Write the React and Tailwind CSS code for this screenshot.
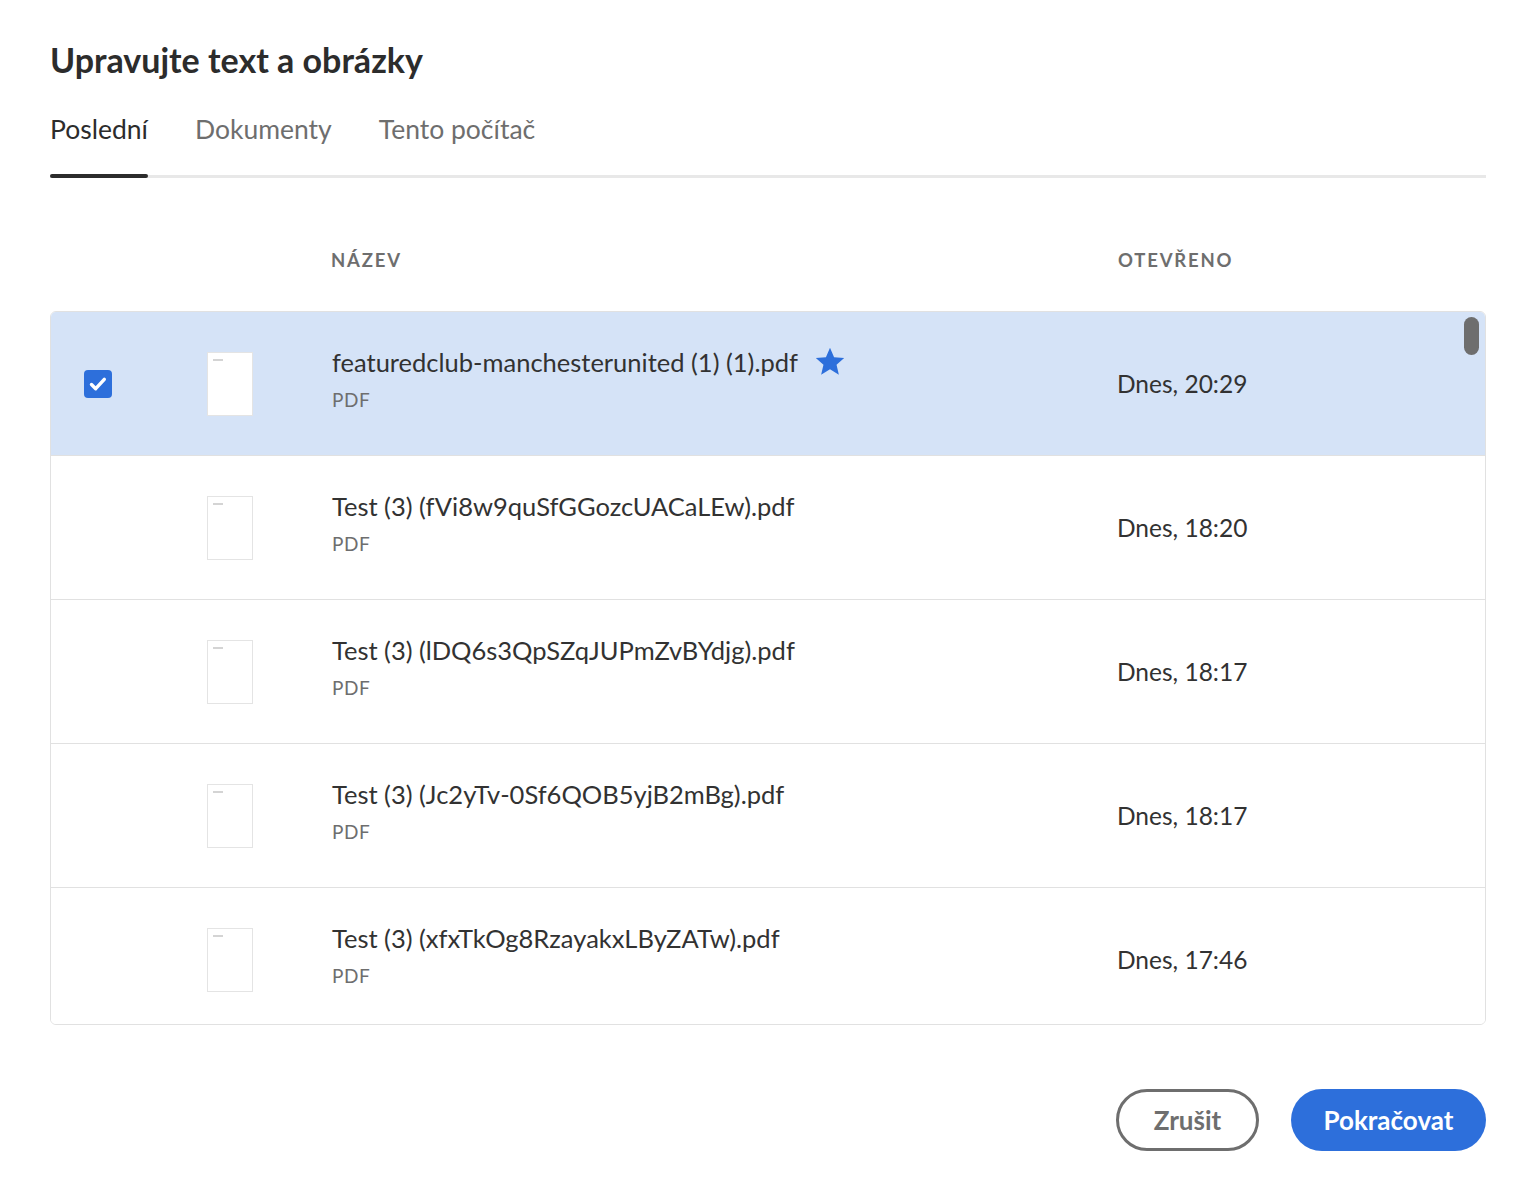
const files = [
  { name: "featuredclub-manchesterunited (1) (1).pdf", opened: "Dnes, 20:29", selected: true, starred: true },
  { name: "Test (3) (fVi8w9quSfGGozcUACaLEw).pdf", opened: "Dnes, 18:20" },
  { name: "Test (3) (lDQ6s3QpSZqJUPmZvBYdjg).pdf", opened: "Dnes, 18:17" },
  { name: "Test (3) (Jc2yTv-0Sf6QOB5yjB2mBg).pdf", opened: "Dnes, 18:17" },
  { name: "Test (3) (xfxTkOg8RzayakxLByZATw).pdf", opened: "Dnes, 17:46" },
];

const Star = () => (
  <svg width="30" height="30" viewBox="1 1.2 22 22" className="ml-[17px]">
    <path
      d="M12 1.8l3 6.9 7.4.6-5.6 4.9 1.7 7.3L12 17.6l-6.5 3.9 1.7-7.3-5.6-4.9 7.4-.6z"
      fill="#2d6fdb"
    />
  </svg>
);

const Checkbox = () => (
  <div className="w-[28px] h-[28px] rounded-[4px] bg-[#2d6fdb] flex items-center justify-center">
    <svg width="22" height="22" viewBox="0 0 22 22">
      <path d="M4.5 11.5l4.2 4.2 8.6-9.4" fill="none" stroke="#fff" strokeWidth="3.4" strokeLinecap="round" strokeLinejoin="round" />
    </svg>
  </div>
);

const Thumb = () => (
  <div className="w-[46px] h-[64px] bg-white border border-[#e4e4e4] relative">
    <div className="absolute left-[5px] top-[6px] w-[10px] h-[2px] bg-[#d4d4d4]" />
  </div>
);

const FileRow = ({ file }) => (
  <div
    className={
      "flex items-center h-[144px] shrink-0 border-b border-[#e1e1e1] " +
      (file.selected ? "bg-[#d5e3f7]" : "bg-white")
    }
  >
    <div className="w-[156px] pl-[33px] shrink-0">{file.selected && <Checkbox />}</div>
    <div className="w-[125px] shrink-0">
      <Thumb />
    </div>
    <div className="w-[785px] shrink-0 self-start pt-[34px]">
      <div className="flex items-center">
        <span className="text-[25.5px] leading-[32px] text-[#323232]">{file.name}</span>
        {file.starred && <Star />}
      </div>
      <div className="mt-[10px] text-[19px] leading-[24px] tracking-[0.6px] text-[#6e6e6e]">PDF</div>
    </div>
    <div className="text-[24.5px] leading-[32px] text-[#323232]">{file.opened}</div>
  </div>
);

export default function App() {
  return (
    <div className="bg-white min-h-[1196px] w-[1532px]" style={{ fontFamily: "Lato, 'Open Sans', sans-serif" }}>
      <div className="ml-[50px] w-[1436px] pt-[39px]">
        <h1 className="text-[34px] leading-[42px] font-bold text-[#2c2c2c]">Upravujte text a obrázky</h1>

        {/* tabs */}
        <div className="mt-[32px] flex gap-[47px] border-b-[3px] border-[#e8e8e8]">
          <div className="relative pb-[30px] text-[26.5px] leading-[32px] text-[#2c2c2c]">
            Poslední
            <span className="absolute left-0 right-0 bottom-[-3px] h-[4px] rounded-full bg-[#2c2c2c]" />
          </div>
          <div className="pb-[30px] text-[26.5px] leading-[32px] text-[#6e6e6e]">Dokumenty</div>
          <div className="pb-[30px] text-[26.5px] leading-[32px] text-[#6e6e6e]">Tento počítač</div>
        </div>

        {/* column headers */}
        <div className="flex pt-[72px] pb-[41px] text-[18.5px] leading-[20px] font-bold tracking-[1.8px] text-[#6e6e6e]">
          <div className="w-[281px] shrink-0" />
          <div className="w-[787px] shrink-0">NÁZEV</div>
          <div>OTEVŘENO</div>
        </div>

        {/* file list */}
        <div className="relative h-[714px] border border-[#e1e1e1] rounded-[6px] overflow-hidden flex flex-col">
          {files.map((f) => (
            <FileRow key={f.name} file={f} />
          ))}
          <div className="absolute right-[6px] top-[5px] w-[15px] h-[38px] rounded-full bg-[#6e6e6e]" />
        </div>

        {/* actions */}
        <div className="mt-[64px] flex justify-end gap-[32px]">
          <button className="w-[143px] h-[62px] rounded-full border-[3px] border-[#6e6e6e] text-[26px] font-bold text-[#6e6e6e]">
            Zrušit
          </button>
          <button className="w-[195px] h-[62px] rounded-full bg-[#2d6fdb] text-[26px] font-bold text-white">
            Pokračovat
          </button>
        </div>
      </div>
    </div>
  );
}
